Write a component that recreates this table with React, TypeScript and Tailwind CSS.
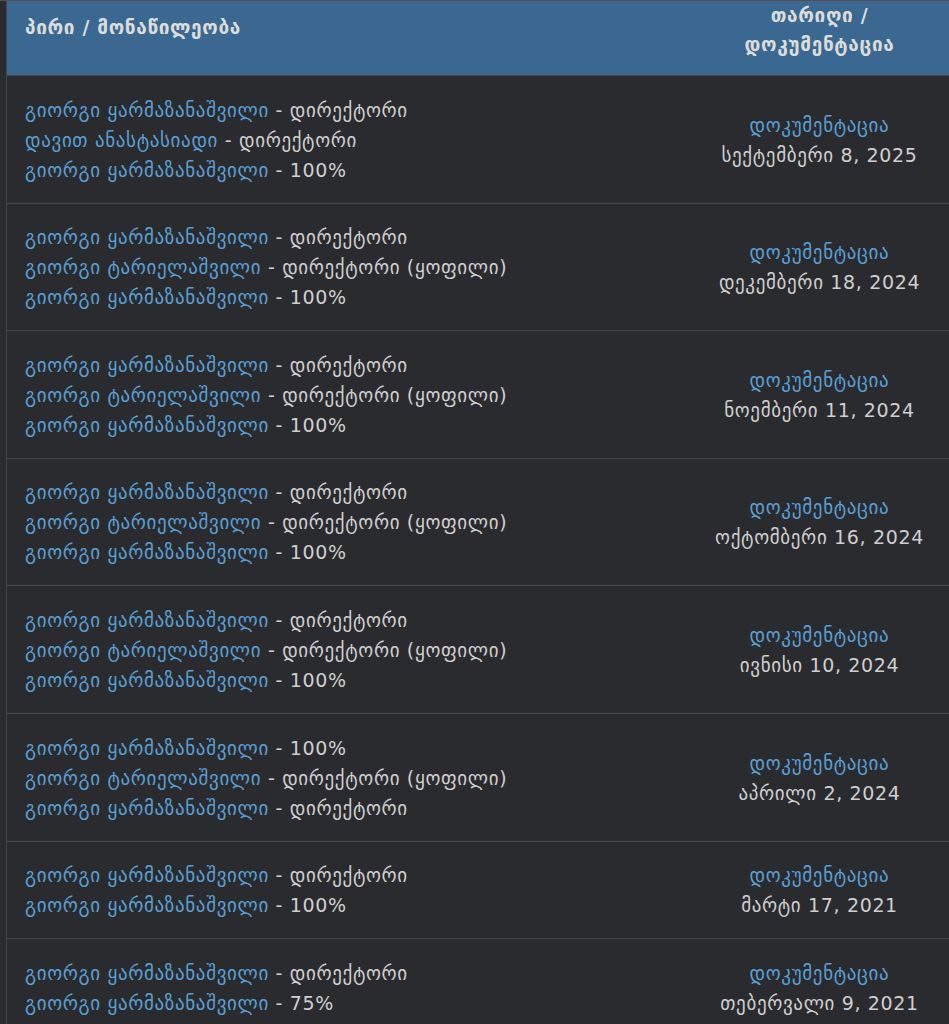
import React from "react";

type Line = { name: string; role: string };
type Row = { lines: Line[]; date: string };

const G = "გიორგი ყარმაზანაშვილი";
const T = "გიორგი ტარიელაშვილი";
const D = "დირექტორი";
const DF = "დირექტორი (ყოფილი)";

const rows: Row[] = [
  { lines: [{ name: G, role: D }, { name: "დავით ანასტასიადი", role: D }, { name: G, role: "100%" }], date: "სექტემბერი 8, 2025" },
  { lines: [{ name: G, role: D }, { name: T, role: DF }, { name: G, role: "100%" }], date: "დეკემბერი 18, 2024" },
  { lines: [{ name: G, role: D }, { name: T, role: DF }, { name: G, role: "100%" }], date: "ნოემბერი 11, 2024" },
  { lines: [{ name: G, role: D }, { name: T, role: DF }, { name: G, role: "100%" }], date: "ოქტომბერი 16, 2024" },
  { lines: [{ name: G, role: D }, { name: T, role: DF }, { name: G, role: "100%" }], date: "ივნისი 10, 2024" },
  { lines: [{ name: G, role: "100%" }, { name: T, role: DF }, { name: G, role: D }], date: "აპრილი 2, 2024" },
  { lines: [{ name: G, role: D }, { name: G, role: "100%" }], date: "მარტი 17, 2021" },
  { lines: [{ name: G, role: D }, { name: G, role: "75%" }], date: "თებერვალი 9, 2021" },
];

export default function App() {
  return (
    <div
      className="min-h-screen w-full bg-[#2a2b2e] text-[#cfcfcf] text-[19px] leading-[30px] tracking-[0.65px]"
      style={{ fontFamily: '"DejaVu Sans", "Noto Sans", sans-serif' }}
    >
      <div className="h-[1px] bg-[#5b4c52]" />
      <div className="ml-[6px] border-l border-[#46474a]">
        <div className="flex bg-[#3a6890] font-bold h-[75px] border-b border-[#46474a] leading-[29px] text-[#dcdcdc]">
          <div className="flex-1 pl-[18px] pt-[12px]">პირი / მონაწილეობა</div>
          <div className="w-[259px] text-center">
            <div>თარიღი /</div>
            <div>დოკუმენტაცია</div>
          </div>
        </div>
        {rows.map((r, i) => (
          <div key={i} className="flex border-b border-[#46474a] pt-[18.6px] pb-[18px]">
            <div className="flex-1 pl-[18px] flex flex-col justify-center">
              {r.lines.map((l, j) => (
                <div key={j} className="whitespace-nowrap">
                  <span className="text-[#5b9fd4]">{l.name}</span> - {l.role}
                </div>
              ))}
            </div>
            <div className="w-[259px] flex flex-col justify-center items-center">
              <div className="text-[#5b9fd4]">დოკუმენტაცია</div>
              <div>{r.date}</div>
            </div>
          </div>
        ))}
      </div>
    </div>
  );
}
